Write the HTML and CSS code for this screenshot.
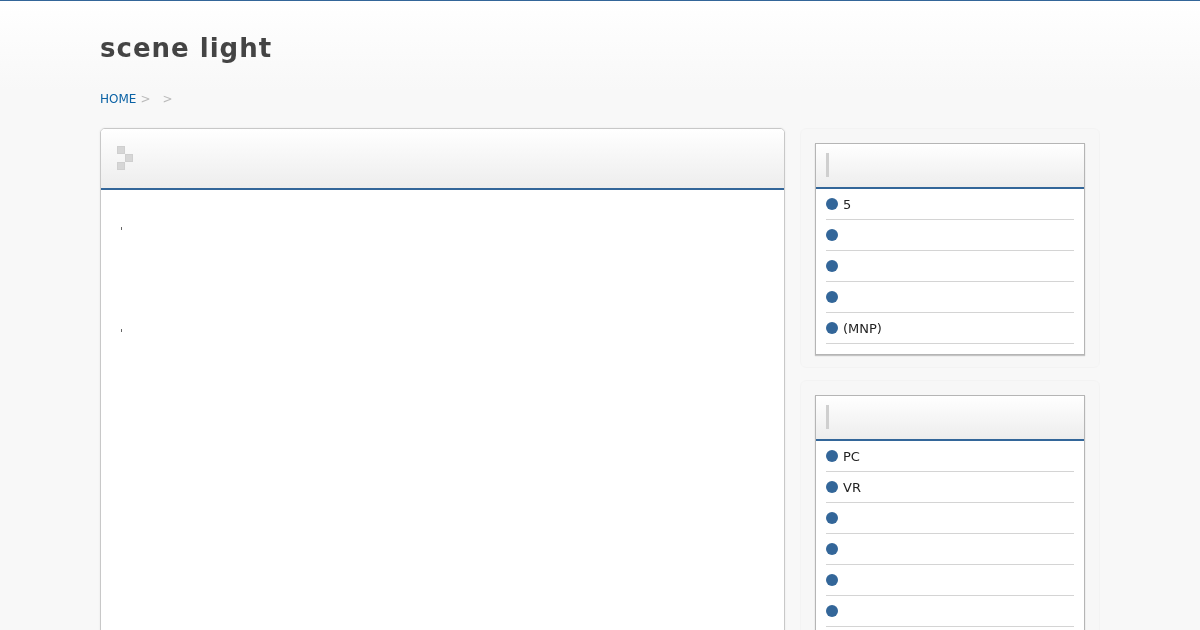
FILE: index.html
```html
<!DOCTYPE html>
<html lang="en">
<head>
<meta charset="utf-8">
<title>scene light</title>
<link rel="stylesheet" href="styles.css">
</head>
<body>
<div class="wrap">
  <h1 class="title">scene light</h1>
  <nav class="crumbs"><a class="crumb-link" href="#">HOME</a><span class="sep">&gt;</span><span class="sep sep-next">&gt;</span></nav>
  <div class="columns">
    <main class="main">
      <header class="main-head">
        <span class="squares"><i class="sq"></i><i class="sq sq-right"></i><i class="sq"></i></span>
      </header>
      <div class="main-body">
        <p class="para"><span class="tick"></span></p>
        <p class="para"><span class="tick"></span></p>
      </div>
    </main>
    <aside class="side">
      <section class="widget">
        <div class="box">
          <div class="box-head"><span class="bar"></span></div>
          <ul class="list">
            <li class="item"><span class="dot"></span>5</li>
            <li class="item"><span class="dot"></span></li>
            <li class="item"><span class="dot"></span></li>
            <li class="item"><span class="dot"></span></li>
            <li class="item"><span class="dot"></span>(MNP)</li>
          </ul>
        </div>
      </section>
      <section class="widget">
        <div class="box">
          <div class="box-head"><span class="bar"></span></div>
          <ul class="list">
            <li class="item"><span class="dot"></span>PC</li>
            <li class="item"><span class="dot"></span>VR</li>
            <li class="item"><span class="dot"></span></li>
            <li class="item"><span class="dot"></span></li>
            <li class="item"><span class="dot"></span></li>
            <li class="item"><span class="dot"></span></li>
            <li class="item"><span class="dot"></span></li>
          </ul>
        </div>
      </section>
    </aside>
  </div>
</div>
</body>
</html>
```
FILE: styles.css
```css
* { box-sizing: border-box; }
html, body { height: 630px; overflow: hidden; }
body {
  margin: 0;
  border-top: 1px solid #336699;
  background: #f8f8f8 linear-gradient(#ffffff 0, #f8f8f8 90px) no-repeat;
  font-family: "DejaVu Sans", sans-serif;
  color: #222;
}
.wrap { width: 1000px; margin: 0 auto; will-change: transform; }
.title {
  margin: 0;
  padding-top: 30px;
  height: 83px;
  font-size: 26px;
  line-height: 34px;
  font-weight: bold;
  letter-spacing: 1px;
  color: #444;
}
.crumbs { height: 44px; padding-top: 7px; font-size: 12px; line-height: 16px; color: #bbb; }
.crumb-link { color: #0a62a5; text-decoration: none; }
.sep { margin-left: 4px; }
.sep-next { margin-left: 12px; }
.columns { display: flex; gap: 15px; align-items: flex-start; }
.main {
  width: 685px;
  height: 900px;
  flex: none;
  background: #fff;
  border: 1px solid #c8c8c8;
  border-radius: 5px;
  box-shadow: 0 0 2px #e2e2e2;
}
.main-head {
  height: 61px;
  padding: 17px 16px 0;
  border-bottom: 2px solid #336699;
  border-radius: 4px 4px 0 0;
  background: linear-gradient(#ffffff, #ededed);
}
.squares { display: flex; flex-direction: column; align-items: flex-start; }
.sq { display: block; width: 8px; height: 8px; background: #d6d6d6; border: 1px solid #cfcfcf; }
.sq-right { margin-left: 8px; }
.main-body { padding: 34px 20px 0; }
.para { margin: 0 0 94px; height: 8px; display: flex; align-items: center; }
.tick { display: block; width: 1px; height: 3px; background: #666; }
.side { width: 300px; flex: none; display: flex; flex-direction: column; gap: 12px; }
.widget {
  padding: 14px 14px 12px;
  background: #f7f7f7;
  border: 1px solid #f3f3f3;
  border-radius: 6px;
}
.box {
  background: #fff;
  border: 1px solid #b5b5b5;
  box-shadow: 0 1px 1px #c4c4c4;
}
.box-head {
  height: 45px;
  padding: 9px 10px 0;
  border-bottom: 2px solid #336699;
  background: linear-gradient(#ffffff, #ededed);
}
.bar { display: block; width: 3px; height: 24px; background: #cfcfcf; }
.list { list-style: none; margin: 0; padding: 0 10px 10px; }
.item {
  display: flex;
  align-items: center;
  height: 31px;
  border-bottom: 1px solid #d4d4d4;
  font-size: 13px;
  color: #222;
}
.dot {
  width: 12px;
  height: 12px;
  margin-right: 5px;
  border-radius: 50%;
  background: #336699;
  flex: none;
}
```
